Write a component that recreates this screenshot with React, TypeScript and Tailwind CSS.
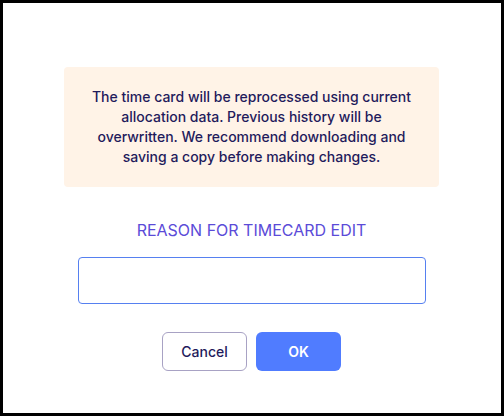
export default function App() {
  return (
    <div
      className="w-[504px] h-[416px] border-[3px] border-black bg-white flex flex-col items-center pr-[1px]"
      style={{ fontFamily: "Inter, 'Noto Sans', sans-serif" }}
    >
      <div className="mt-[64px] w-[375px] h-[120px] rounded-[4px] bg-[#fff3e7] flex items-center justify-center">
        <p className="text-[14px] leading-[20px] font-medium text-center text-[#1f1b5c]">
          The time card will be reprocessed using current
          <br />
          allocation data. Previous history will be
          <br />
          overwritten. We recommend downloading and
          <br />
          saving a copy before making changes.
        </p>
      </div>
      <div className="mt-[33px] text-[16px] leading-[20px] text-[#5b4bd8] uppercase">
        Reason for timecard edit
      </div>
      <input
        className="mt-[17px] w-[348px] h-[47px] rounded-[4px] border border-[#5680f0] outline-none px-3 text-[14px]"
        type="text"
      />
      <div className="mt-[28px] flex gap-[9px]">
        <button className="w-[85px] h-[39px] rounded-[6px] border border-[#a8a2c4] bg-white text-[14px] font-medium text-[#1f1b5c]">
          Cancel
        </button>
        <button className="w-[85px] h-[39px] rounded-[6px] bg-[#507cff] text-[14px] font-semibold text-white">
          OK
        </button>
      </div>
    </div>
  );
}
